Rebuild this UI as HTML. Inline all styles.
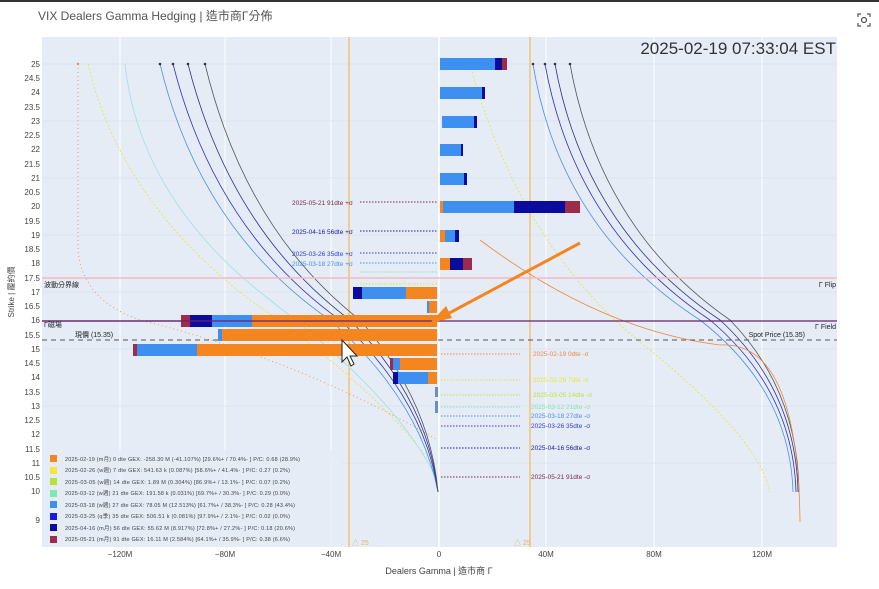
<!DOCTYPE html>
<html><head><meta charset="utf-8"><style>
body{margin:0;width:879px;height:584px;background:#fff;overflow:hidden;font-family:"Liberation Sans","Noto Sans CJK TC",sans-serif}
</style></head><body>
<svg width="879" height="584" viewBox="0 0 879 584" xmlns="http://www.w3.org/2000/svg" font-family="Liberation Sans, Noto Sans CJK TC, sans-serif">
<rect x="0" y="0" width="879" height="2" fill="#333"/>
<text x="38" y="20" font-size="12" fill="#555">VIX Dealers Gamma Hedging | 造市商Γ分佈</text>
<g transform="translate(864,20)" stroke="#555" fill="none" stroke-width="1.2"><path d="M-6,-3v-3h3M3,-6h3v3M6,3v3h-3M-3,6h-3v-3"/><circle cx="0" cy="0" r="2.5"/></g>
<rect x="42" y="37" width="795" height="510" fill="#e5ecf6"/>
<g stroke="#fff" stroke-width="1">
<line x1="120" y1="37" x2="120" y2="547"/><line x1="225" y1="37" x2="225" y2="547"/><line x1="331" y1="37" x2="331" y2="547"/>
<line x1="546" y1="37" x2="546" y2="547"/><line x1="654" y1="37" x2="654" y2="547"/><line x1="762" y1="37" x2="762" y2="547"/>
</g>
<g stroke="#dde4ee" stroke-width="1">
<line x1="42" y1="64" x2="837" y2="64"/><line x1="42" y1="121" x2="837" y2="121"/><line x1="42" y1="178" x2="837" y2="178"/><line x1="42" y1="235" x2="837" y2="235"/><line x1="42" y1="292" x2="837" y2="292"/><line x1="42" y1="349" x2="837" y2="349"/><line x1="42" y1="406" x2="837" y2="406"/><line x1="42" y1="463" x2="837" y2="463"/>
</g>
<line x1="439" y1="37" x2="439" y2="547" stroke="#fff" stroke-width="1.5"/>
<g font-size="8" fill="#444" text-anchor="end">
<text x="40" y="67">25</text><text x="40" y="81">24.5</text><text x="40" y="95">24</text><text x="40" y="110">23.5</text><text x="40" y="124">23</text><text x="40" y="138">22.5</text><text x="40" y="152">22</text><text x="40" y="167">21.5</text><text x="40" y="181">21</text><text x="40" y="195">20.5</text><text x="40" y="209">20</text><text x="40" y="224">19.5</text><text x="40" y="238">19</text><text x="40" y="252">18.5</text><text x="40" y="266">18</text><text x="40" y="281">17.5</text><text x="40" y="295">17</text><text x="40" y="309">16.5</text><text x="40" y="323">16</text><text x="40" y="338">15.5</text><text x="40" y="352">15</text><text x="40" y="366">14.5</text><text x="40" y="380">14</text><text x="40" y="395">13.5</text><text x="40" y="409">13</text><text x="40" y="423">12.5</text><text x="40" y="437">12</text><text x="40" y="452">11.5</text><text x="40" y="466">11</text><text x="40" y="480">10.5</text><text x="40" y="494">10</text><text x="40" y="523">9</text>
</g>
<text transform="translate(14,292) rotate(-90)" font-size="8" fill="#444" text-anchor="middle">Strike | 履約價</text>
<g font-size="8" fill="#444" text-anchor="middle">
<text x="120" y="557">−120M</text><text x="225" y="557">−80M</text><text x="331" y="557">−40M</text><text x="439" y="557">0</text><text x="546" y="557">40M</text><text x="654" y="557">80M</text><text x="762" y="557">120M</text>
</g>
<text x="439" y="574" font-size="9" fill="#444" text-anchor="middle">Dealers Gamma | 造市商 Γ</text>
<line x1="349" y1="37" x2="349" y2="547" stroke="#f5b85a" stroke-width="1.2"/>
<line x1="530" y1="37" x2="530" y2="547" stroke="#f5b85a" stroke-width="1.2"/>
<text x="352" y="545" font-size="7" fill="#e9b460">△ 25</text><text x="514" y="545" font-size="7" fill="#e9b460">△ 25</text>
<g fill="none" stroke-width="0.8">
<path d="M78,64 L78,250 Q82,300 140,320 Q300,360 438,440" stroke="#f0883a" stroke-dasharray="1 3"/>
<path d="M88,64 Q120,200 250,300 Q380,390 436,470" stroke="#e6e62e" stroke-dasharray="2 2"/>
<path d="M125,64 Q140,200 270,300 Q400,400 437,480" stroke="#a0e0e8"/>
<path d="M160,64 Q200,230 330,320 Q420,400 438,492" stroke="#4a8ff0"/>
<path d="M173,64 Q215,230 340,320 Q425,400 438,492" stroke="#3030c0"/>
<path d="M188,64 Q230,230 350,320 Q428,400 438,492" stroke="#303090"/>
<path d="M205,64 Q245,230 360,320 Q430,400 438,492" stroke="#555"/>
</g>
<g fill="none" stroke-width="0.8">
<path d="M533,64 Q560,230 700,320 Q790,390 793,492" stroke="#4a8ff0"/>
<path d="M545,64 Q575,230 710,320 Q793,390 796,492" stroke="#3030c0"/>
<path d="M555,64 Q585,230 720,320 Q796,390 798,492" stroke="#303090"/>
<path d="M570,64 Q600,230 730,320 Q798,390 799,492" stroke="#555"/>
<path d="M470,64 Q520,250 650,350 Q760,440 770,492" stroke="#e6e62e" stroke-dasharray="2 2"/>
<path d="M480,240 Q600,330 720,345 Q798,340 800,522" stroke="#f0883a"/>
</g>
<g fill="#334">
<circle cx="78" cy="64" r="1.2" fill="#f0883a"/><circle cx="160" cy="64" r="1.3"/><circle cx="173" cy="64" r="1.3"/><circle cx="188" cy="64" r="1.3"/><circle cx="205" cy="64" r="1.3"/>
<circle cx="533" cy="64" r="1.3"/><circle cx="545" cy="64" r="1.3"/><circle cx="555" cy="64" r="1.3"/><circle cx="570" cy="64" r="1.3"/>
</g>
<line x1="42" y1="278" x2="837" y2="278" stroke="#f7b8c4" stroke-width="1.5"/>
<line x1="42" y1="321" x2="837" y2="321" stroke="#6a2070" stroke-width="1.2"/>
<line x1="42" y1="340" x2="837" y2="340" stroke="#555" stroke-width="1" stroke-dasharray="5 4"/>
<g>
<rect x="440" y="58" width="55" height="12" fill="#3d8ff0"/><rect x="495" y="58" width="7" height="12" fill="#0b0b9e"/><rect x="502" y="58" width="5" height="12" fill="#9c2b4c"/>
<rect x="440" y="87" width="42" height="12" fill="#3d8ff0"/><rect x="482" y="87" width="3" height="12" fill="#0b0b9e"/>
<rect x="442" y="116" width="32" height="12" fill="#3d8ff0"/><rect x="474" y="116" width="3" height="12" fill="#0b0b9e"/>
<rect x="440" y="144" width="21" height="12" fill="#3d8ff0"/><rect x="461" y="144" width="2" height="12" fill="#0b0b9e"/>
<rect x="440" y="173" width="24" height="12" fill="#3d8ff0"/><rect x="464" y="173" width="3" height="12" fill="#0b0b9e"/>
<rect x="440" y="201" width="3" height="12" fill="#f5851f"/><rect x="443" y="201" width="71" height="12" fill="#3d8ff0"/><rect x="514" y="201" width="51" height="12" fill="#0b0b9e"/><rect x="565" y="201" width="15" height="12" fill="#9c2b4c"/>
<rect x="440" y="230" width="5" height="12" fill="#f5851f"/><rect x="445" y="230" width="10" height="12" fill="#3d8ff0"/><rect x="455" y="230" width="4" height="12" fill="#0b0b9e"/>
<rect x="440" y="258" width="10" height="12" fill="#f5851f"/><rect x="450" y="258" width="13" height="12" fill="#0b0b9e"/><rect x="463" y="258" width="9" height="12" fill="#9c2b4c"/>
</g>
<g>
<rect x="353" y="287" width="9" height="12" fill="#0b0b9e"/><rect x="362" y="287" width="44" height="12" fill="#3d8ff0"/><rect x="406" y="287" width="31" height="12" fill="#f5851f"/>
<rect x="427" y="301" width="2" height="12" fill="#3d8ff0"/><rect x="429" y="301" width="8" height="12" fill="#f5851f"/>
<rect x="181" y="315" width="9" height="12" fill="#9c2b4c"/><rect x="190" y="315" width="22" height="12" fill="#0b0b9e"/><rect x="212" y="315" width="40" height="12" fill="#3d8ff0"/><rect x="252" y="315" width="185" height="12" fill="#f5851f"/>
<rect x="218" y="329" width="4" height="12" fill="#3d8ff0"/><rect x="222" y="329" width="215" height="12" fill="#f5851f"/>
<rect x="133" y="344" width="4" height="12" fill="#9c2b4c"/><rect x="137" y="344" width="60" height="12" fill="#3d8ff0"/><rect x="197" y="344" width="240" height="12" fill="#f5851f"/>
<rect x="390" y="358" width="3" height="12" fill="#9c2b4c"/><rect x="393" y="358" width="7" height="12" fill="#3d8ff0"/><rect x="400" y="358" width="37" height="12" fill="#f5851f"/>
<rect x="393" y="372" width="5" height="12" fill="#0b0b9e"/><rect x="398" y="372" width="30" height="12" fill="#3d8ff0"/><rect x="428" y="372" width="9" height="12" fill="#f5851f"/>
<rect x="435" y="387" width="3" height="10" fill="#6a8fc8"/><rect x="435" y="401" width="3" height="12" fill="#6a8fc8"/>
</g>
<line x1="42" y1="321" x2="437" y2="321" stroke="#6a2070" stroke-width="1.2"/>
<line x1="580" y1="243" x2="440" y2="318" stroke="#f5851f" stroke-width="3"/>
<polygon points="430,323 446,306 452,318" fill="#f5851f"/>
<path d="M342,340 L342,362 L347,357 L351,366 L354,364 L350,356 L357,356 Z" fill="#fff" stroke="#222" stroke-width="1"/>
<g font-size="6.5">
<text x="292" y="205" fill="#7a2a4a">2025-05-21 91dte +σ</text><line x1="360" y1="202" x2="437" y2="202" stroke="#7a2a4a" stroke-dasharray="1.5 1.5"/>
<text x="292" y="234" fill="#1a1aa0">2025-04-16 56dte +σ</text><line x1="360" y1="231" x2="437" y2="231" stroke="#1a1aa0" stroke-dasharray="1.5 1.5"/>
<text x="292" y="256" fill="#2f3fd0">2025-03-26 35dte +σ</text><line x1="360" y1="253" x2="437" y2="253" stroke="#2f3fd0" stroke-dasharray="1.5 1.5"/>
<text x="292" y="266" fill="#4a8ff0">2025-03-18 27dte +σ</text><line x1="360" y1="263" x2="437" y2="263" stroke="#4a8ff0" stroke-dasharray="1.5 1.5"/>
<line x1="360" y1="272" x2="437" y2="272" stroke="#7ee8b0" stroke-dasharray="1.5 1.5"/>
<line x1="360" y1="284" x2="437" y2="284" stroke="#e6e62e" stroke-dasharray="1.5 1.5"/>
</g>
<g font-size="6.5">
<line x1="441" y1="354" x2="520" y2="354" stroke="#f0883a" stroke-dasharray="1.5 1.5"/><text x="533" y="356" fill="#f0883a">2025-02-19 0dte -σ</text>
<line x1="441" y1="380" x2="520" y2="380" stroke="#e6e62e" stroke-dasharray="1.5 1.5"/><text x="533" y="382" fill="#e6e62e">2025-02-26 7dte -σ</text>
<line x1="441" y1="395" x2="520" y2="395" stroke="#c0e040" stroke-dasharray="1.5 1.5"/><text x="533" y="397" fill="#c0e040">2025-03-05 14dte -σ</text>
<line x1="441" y1="407" x2="520" y2="407" stroke="#7ee8b0" stroke-dasharray="1.5 1.5"/><text x="531" y="409" fill="#7ee8b0">2025-03-12 21dte -σ</text>
<line x1="441" y1="416" x2="520" y2="416" stroke="#4a8ff0" stroke-dasharray="1.5 1.5"/><text x="531" y="418" fill="#4a8ff0">2025-03-18 27dte -σ</text>
<line x1="441" y1="426" x2="520" y2="426" stroke="#2f3fd0" stroke-dasharray="1.5 1.5"/><text x="531" y="428" fill="#2f3fd0">2025-03-26 35dte -σ</text>
<line x1="441" y1="448" x2="520" y2="448" stroke="#1a1aa0" stroke-dasharray="1.5 1.5"/><text x="531" y="450" fill="#1a1aa0">2025-04-16 56dte -σ</text>
<line x1="441" y1="477" x2="520" y2="477" stroke="#7a2a4a" stroke-dasharray="1.5 1.5"/><text x="531" y="479" fill="#7a2a4a">2025-05-21 91dte -σ</text>
</g>
<text x="44" y="287" font-size="7" fill="#222">波動分界線</text>
<text x="44" y="327" font-size="7" fill="#222">Γ磁場</text>
<text x="75" y="337" font-size="7" fill="#222">現價 (15.35)</text>
<text x="836" y="287" font-size="7" fill="#222" text-anchor="end">Γ Flip</text>
<text x="836" y="329" font-size="7" fill="#222" text-anchor="end">Γ Field</text>
<text x="805" y="337" font-size="7" fill="#222" text-anchor="end">Spot Price (15.35)</text>
<text x="836" y="54" font-size="17" fill="#333" text-anchor="end">2025-02-19 07:33:04 EST</text>
<rect x="42" y="450" width="300" height="97" fill="#e5ecf6" opacity="0.85"/>
<g font-size="5.5" fill="#444" lengthAdjust="spacingAndGlyphs">
<rect x="50" y="455" width="7" height="7" fill="#f5851f"/><text x="65" y="461" textLength="235">2025-02-19 (m月)  0 dte   GEX: -258.30 M (-41.107%)    [29.6%+ / 70.4%- ]     P/C: 0.68   (28.9%)</text>
<rect x="50" y="467" width="7" height="7" fill="#f5e63a"/><text x="65" y="472" textLength="225">2025-02-26 (w週)  7 dte   GEX: 541.63 k (0.087%)    [58.6%+ / 41.4%- ]     P/C: 0.27   (0.2%)</text>
<rect x="50" y="478" width="7" height="7" fill="#b8e040"/><text x="65" y="484" textLength="225">2025-03-05 (w週)  14 dte   GEX: 1.89 M (0.304%)    [86.9%+ / 13.1%- ]     P/C: 0.07   (0.2%)</text>
<rect x="50" y="490" width="7" height="7" fill="#7ee8b0"/><text x="65" y="495" textLength="225">2025-03-12 (w週)  21 dte   GEX: 191.58 k (0.031%)    [69.7%+ / 30.3%- ]     P/C: 0.29   (0.0%)</text>
<rect x="50" y="501" width="7" height="7" fill="#3d8ff0"/><text x="65" y="507" textLength="230">2025-03-18 (w週)  27 dte   GEX: 78.05 M (12.513%)    [61.7%+ / 38.3%- ]     P/C: 0.28   (43.4%)</text>
<rect x="50" y="513" width="7" height="7" fill="#1a1ae8"/><text x="65" y="518" textLength="225">2025-03-25 (q季)  35 dte   GEX: 506.51 k (0.081%)    [97.9%+ / 2.1%- ]     P/C: 0.02   (0.0%)</text>
<rect x="50" y="524" width="7" height="7" fill="#0b0b9e"/><text x="65" y="530" textLength="230">2025-04-16 (m月)  56 dte   GEX: 55.62 M (8.917%)    [72.8%+ / 27.2%- ]     P/C: 0.18   (20.6%)</text>
<rect x="50" y="536" width="7" height="7" fill="#9c2b4c"/><text x="65" y="541" textLength="225">2025-05-21 (m月)  91 dte   GEX: 16.11 M (2.584%)    [64.1%+ / 35.9%- ]     P/C: 0.38   (6.6%)</text>
</g>
</svg>
</body></html>
